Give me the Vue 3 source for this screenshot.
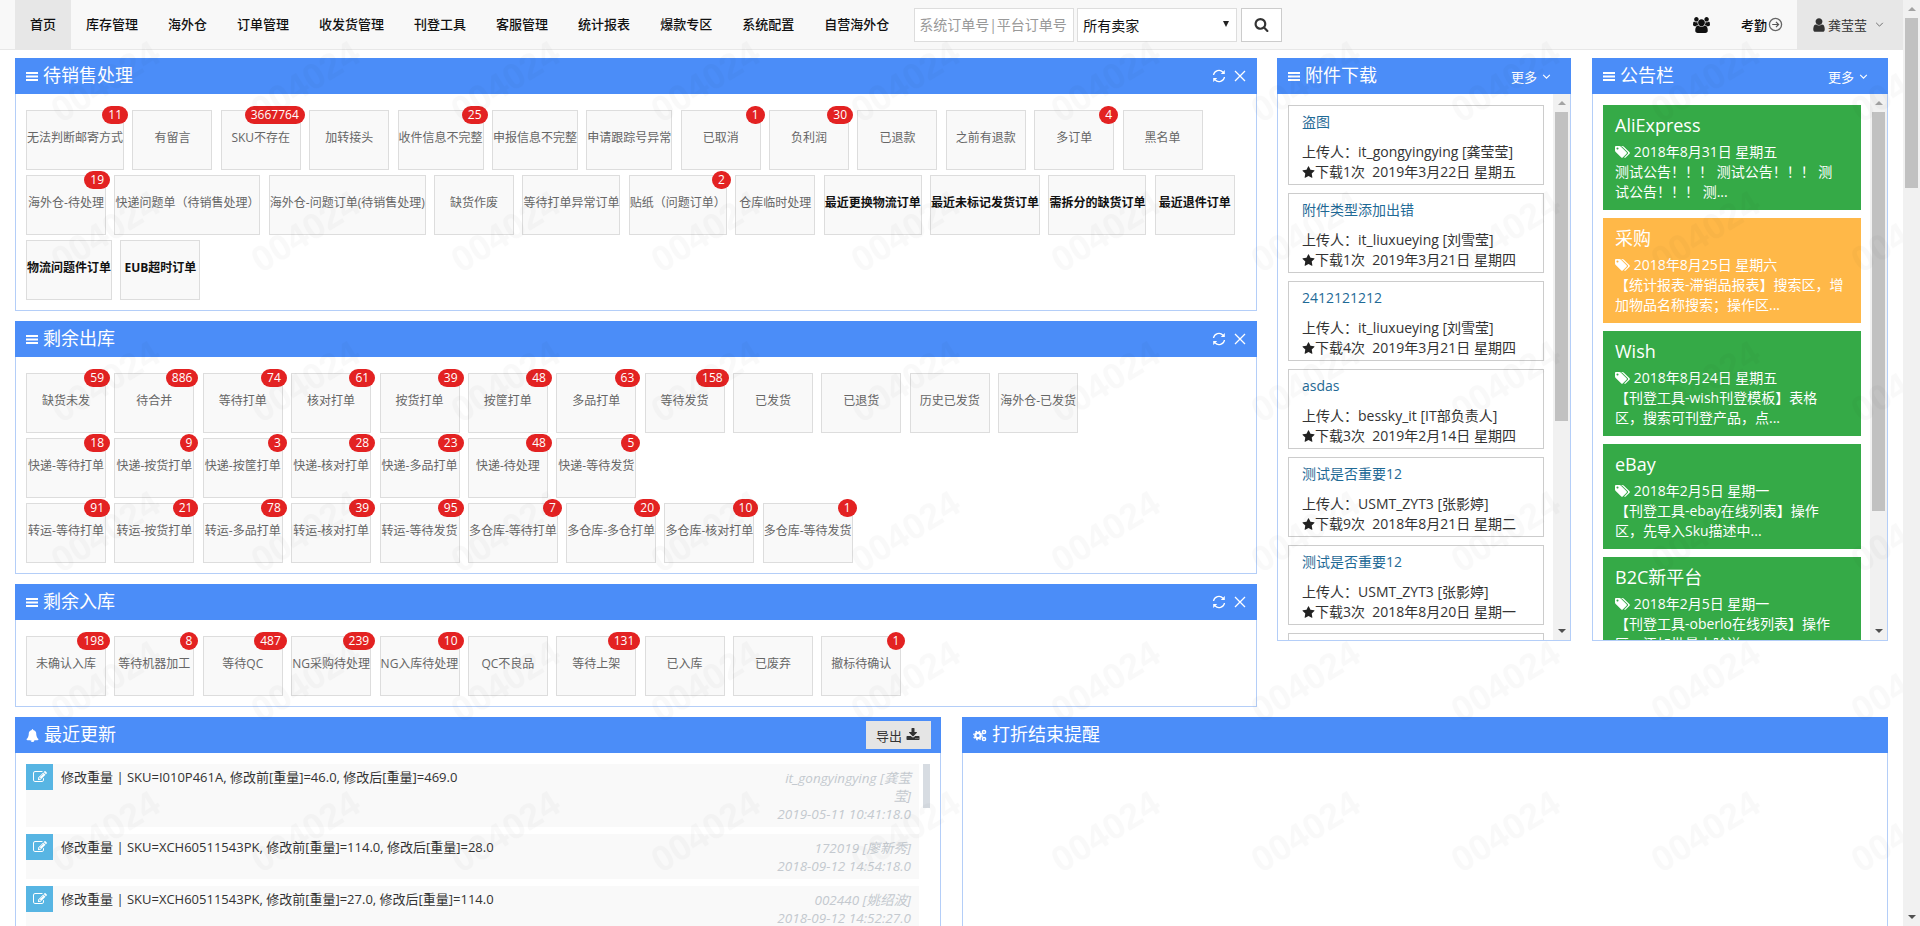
<template>
  <div class="page">
    <div class="main">
      <nav class="navbar">
        <a v-for="(m, i) in menus" :key="m" class="nav-item" :class="{ active: i === 0 }">{{ m }}</a>
        <input class="search-input" placeholder="系统订单号|平台订单号" />
        <div class="seller-select">
          <span>所有卖家</span>
          <i class="select-arrow"></i>
        </div>
        <button class="search-btn">
          <svg viewBox="0 0 1792 1792" width="15" height="15"><path :d="icons.search" fill="#333" /></svg>
        </button>
        <div class="nav-right">
          <svg class="group-icon" viewBox="0 0 1920 1792" width="17" height="16"><path :d="icons.group" fill="#111" /></svg>
          <span class="attend">考勤
            <svg viewBox="0 0 16 16" width="15" height="15">
              <circle cx="8" cy="8" r="6.5" fill="none" stroke="#666" stroke-width="1.4" />
              <path d="M4.5 8h6.5M8.500 5.200 11.300 8 8.500 10.800" fill="none" stroke="#555" stroke-width="1.3" />
            </svg>
          </span>
          <div class="user-box">
            <svg viewBox="0 0 1792 1792" width="16" height="16"><path :d="icons.user" fill="#333" /></svg>
            <span>龚莹莹</span>
            <svg class="user-chevron" viewBox="0 0 10 6" width="9" height="5"><path d="M1 1l4 4 4-4" fill="none" stroke="#666" stroke-width="1.1" /></svg>
          </div>
        </div>
      </nav>

      <div class="content">
        <div class="top-row">
          <div class="left-col">
            <section v-for="p in panels" :key="p.title" class="panel">
              <header class="panel-head">
                <svg class="bars" viewBox="0 0 12 11" width="12" height="11">
                  <path d="M0 1h12v2H0zM0 4.500h12v2H0zM0 8h12v2H0z" fill="#fff" />
                </svg>
                <h3>{{ p.title }}</h3>
                <div class="head-tools">
                  <svg viewBox="0 0 14 14" width="14" height="14">
                    <path d="M1.500 6A5.500 5.500 0 0 1 11 3.200M12.500 8A5.500 5.500 0 0 1 3 10.800" fill="none" stroke="#fff" stroke-width="1.300" />
                    <path d="M12.800 1v4h-4zM1.200 13V9h4z" fill="#fff" />
                  </svg>
                  <svg viewBox="0 0 12 12" width="12" height="12"><path d="M1 1l10 10M11 1 1 11" stroke="#fff" stroke-width="1.300" /></svg>
                </div>
              </header>
              <div class="panel-body">
                <div v-for="(row, r) in p.rows" :key="r" class="tile-row">
                  <div v-for="t in row" :key="t.name" class="tile" :class="{ strong: t.bold }">
                    {{ t.name }}
                    <span v-if="t.n" class="badge">{{ t.n }}</span>
                  </div>
                </div>
              </div>
            </section>
          </div>

          <section class="panel side-panel files">
            <header class="panel-head">
              <svg class="bars" viewBox="0 0 12 11" width="12" height="11">
                <path d="M0 1h12v2H0zM0 4.500h12v2H0zM0 8h12v2H0z" fill="#fff" />
              </svg>
              <h3>附件下载</h3>
              <span class="more">更多
                <svg viewBox="0 0 10 6" width="9" height="5"><path d="M1 1l4 4 4-4" fill="none" stroke="#fff" stroke-width="1.300" /></svg>
              </span>
            </header>
            <div class="side-body">
              <div class="side-list">
                <div v-for="(f, i) in files" :key="i" class="file-item">
                  <template v-if="f.title">
                    <div class="file-title">{{ f.title }}</div>
                    <div>上传人：{{ f.user }}</div>
                    <div class="file-line">
                      <svg viewBox="0 0 1792 1792" width="13" height="13"><path :d="icons.star" fill="#222" /></svg>下载{{ f.count }}次&nbsp; {{ f.date }}
                    </div>
                  </template>
                </div>
              </div>
              <div class="sbar">
                <i class="arrow-up"></i>
                <div class="thumb" :style="{ height: '309px' }"></div>
                <i class="arrow-down"></i>
              </div>
            </div>
          </section>

          <section class="panel side-panel notices">
            <header class="panel-head">
              <svg class="bars" viewBox="0 0 12 11" width="12" height="11">
                <path d="M0 1h12v2H0zM0 4.500h12v2H0zM0 8h12v2H0z" fill="#fff" />
              </svg>
              <h3>公告栏</h3>
              <span class="more">更多
                <svg viewBox="0 0 10 6" width="9" height="5"><path d="M1 1l4 4 4-4" fill="none" stroke="#fff" stroke-width="1.300" /></svg>
              </span>
            </header>
            <div class="side-body">
              <div class="side-list">
                <div v-for="n in notices" :key="n.title" class="notice" :class="n.color">
                  <h4>{{ n.title }}</h4>
                  <div class="notice-date">
                    <svg viewBox="0 0 1920 1792" width="15" height="14"><path :d="icons.tags" fill="#fff" /></svg>
                    {{ n.date }}
                  </div>
                  <div class="notice-text">{{ n.text }}</div>
                </div>
              </div>
              <div class="sbar">
                <i class="arrow-up"></i>
                <div class="thumb" :style="{ height: '399px' }"></div>
                <i class="arrow-down"></i>
              </div>
            </div>
          </section>
        </div>

        <div class="bottom-row">
          <section class="panel bottom-panel">
            <header class="panel-head">
              <svg viewBox="0 0 1792 1792" width="13" height="13"><path :d="icons.bell" fill="#fff" /></svg>
              <h3>最近更新</h3>
              <button class="export-btn">导出
                <svg viewBox="0 0 1792 1792" width="14" height="14"><path :d="icons.download" fill="#333" /></svg>
              </button>
            </header>
            <div class="log-body">
              <div class="log-list">
                <div v-for="(l, i) in logs" :key="i" class="log-row">
                  <div class="log-icon">
                    <svg viewBox="0 0 1792 1792" width="14" height="14"><path :d="icons.edit" fill="#fff" /></svg>
                  </div>
                  <div class="log-msg">{{ l.msg }}</div>
                  <div class="log-meta">
                    <div>{{ l.user }}</div>
                    <div class="log-time">{{ l.time }}</div>
                  </div>
                </div>
              </div>
              <div class="log-bar"></div>
            </div>
          </section>
          <section class="panel bottom-panel">
            <header class="panel-head">
              <svg viewBox="0 0 14 13" width="14" height="13">
                <circle cx="5" cy="6.500" r="2.700" fill="none" stroke="#fff" stroke-width="2.200" />
                <circle cx="5" cy="6.500" r="4.300" fill="none" stroke="#fff" stroke-width="1.200" stroke-dasharray="1.700 1.700" />
                <circle cx="11" cy="3" r="1.600" fill="none" stroke="#fff" stroke-width="1.500" />
                <circle cx="11" cy="10" r="1.600" fill="none" stroke="#fff" stroke-width="1.500" />
              </svg>
              <h3>打折结束提醒</h3>
            </header>
          </section>
        </div>
      </div>

      <svg class="watermark" width="1903" height="926">
        <defs>
          <pattern id="wm" width="200" height="150" patternUnits="userSpaceOnUse">
            <text x="105" y="94" text-anchor="middle" transform="rotate(-32 105 81)" class="wm-text">004024</text>
          </pattern>
        </defs>
        <rect width="1903" height="926" fill="url(#wm)" />
      </svg>
    </div>

    <div class="sbar page-bar">
      <i class="arrow-up"></i>
      <div class="thumb" :style="{ height: '170px' }"></div>
      <i class="arrow-down"></i>
    </div>
  </div>
</template>

<script setup>
const menus = ['首页', '库存管理', '海外仓', '订单管理', '收发货管理', '刊登工具', '客服管理', '统计报表', '爆款专区', '系统配置', '自营海外仓']

const t = (name, n, bold) => ({ name, n, bold })

const panels = [
  {
    title: '待销售处理',
    rows: [
      [t('无法判断邮寄方式', 11), t('有留言'), t('SKU不存在', 3667764), t('加转接头'), t('收件信息不完整', 25), t('申报信息不完整'), t('申请跟踪号异常'), t('已取消', 1), t('负利润', 30), t('已退款'), t('之前有退款'), t('多订单', 4), t('黑名单')],
      [t('海外仓-待处理', 19), t('快递问题单（待销售处理）'), t('海外仓-问题订单(待销售处理)'), t('缺货作废'), t('等待打单异常订单'), t('贴纸（问题订单）', 2), t('仓库临时处理'), t('最近更换物流订单', 0, true), t('最近未标记发货订单', 0, true), t('需拆分的缺货订单', 0, true), t('最近退件订单', 0, true)],
      [t('物流问题件订单', 0, true), t('EUB超时订单', 0, true)]
    ]
  },
  {
    title: '剩余出库',
    rows: [
      [t('缺货未发', 59), t('待合并', 886), t('等待打单', 74), t('核对打单', 61), t('按货打单', 39), t('按筐打单', 48), t('多品打单', 63), t('等待发货', 158), t('已发货'), t('已退货'), t('历史已发货'), t('海外仓-已发货')],
      [t('快递-等待打单', 18), t('快递-按货打单', 9), t('快递-按筐打单', 3), t('快递-核对打单', 28), t('快递-多品打单', 23), t('快递-待处理', 48), t('快递-等待发货', 5)],
      [t('转运-等待打单', 91), t('转运-按货打单', 21), t('转运-多品打单', 78), t('转运-核对打单', 39), t('转运-等待发货', 95), t('多仓库-等待打单', 7), t('多仓库-多仓打单', 20), t('多仓库-核对打单', 10), t('多仓库-等待发货', 1)]
    ]
  },
  {
    title: '剩余入库',
    rows: [
      [t('未确认入库', 198), t('等待机器加工', 8), t('等待QC', 487), t('NG采购待处理', 239), t('NG入库待处理', 10), t('QC不良品'), t('等待上架', 131), t('已入库'), t('已废弃'), t('撤标待确认', 1)]
    ]
  }
]

const files = [
  { title: '盗图', user: 'it_gongyingying [龚莹莹]', count: 1, date: '2019年3月22日 星期五' },
  { title: '附件类型添加出错', user: 'it_liuxueying [刘雪莹]', count: 1, date: '2019年3月21日 星期四' },
  { title: '2412121212', user: 'it_liuxueying [刘雪莹]', count: 4, date: '2019年3月21日 星期四' },
  { title: 'asdas', user: 'bessky_it [IT部负责人]', count: 3, date: '2019年2月14日 星期四' },
  { title: '测试是否重要12', user: 'USMT_ZYT3 [张影婷]', count: 9, date: '2018年8月21日 星期二' },
  { title: '测试是否重要12', user: 'USMT_ZYT3 [张影婷]', count: 3, date: '2018年8月20日 星期一' },
  { title: '' }
]

const notices = [
  { title: 'AliExpress', color: 'green', date: '2018年8月31日 星期五', text: '测试公告！！！ 测试公告！！！ 测\n试公告！！！ 测...' },
  { title: '采购', color: 'orange', date: '2018年8月25日 星期六', text: '【统计报表-滞销品报表】搜索区，增\n加物品名称搜索；操作区...' },
  { title: 'Wish', color: 'green', date: '2018年8月24日 星期五', text: '【刊登工具-wish刊登模板】表格\n区，搜索可刊登产品，点...' },
  { title: 'eBay', color: 'green', date: '2018年2月5日 星期一', text: '【刊登工具-ebay在线列表】操作\n区，先导入Sku描述中...' },
  { title: 'B2C新平台', color: 'green', date: '2018年2月5日 星期一', text: '【刊登工具-oberlo在线列表】操作\n区，添加批量上除送...' }
]

const logs = [
  { msg: '修改重量 | SKU=I010P461A, 修改前[重量]=46.0, 修改后[重量]=469.0', user: 'it_gongyingying [龚莹莹]', time: '2019-05-11 10:41:18.0' },
  { msg: '修改重量 | SKU=XCH60511543PK, 修改前[重量]=114.0, 修改后[重量]=28.0', user: '172019 [廖新秀]', time: '2018-09-12 14:54:18.0' },
  { msg: '修改重量 | SKU=XCH60511543PK, 修改前[重量]=27.0, 修改后[重量]=114.0', user: '002440 [姚绍波]', time: '2018-09-12 14:52:27.0' }
]

const icons = {
  search: 'M1216 832q0-185-131.5-316.5t-316.5-131.5-316.5 131.5-131.5 316.5 131.5 316.5 316.5 131.5 316.5-131.5 131.5-316.5zm512 832q0 52-38 90t-90 38q-54 0-90-38l-343-342q-179 124-399 124-143 0-273.5-55.5t-225-150-150-225-55.5-273.5 55.5-273.5 150-225 225-150 273.5-55.5 273.5 55.5 225 150 150 225 55.5 273.5q0 220-124 399l343 343q37 37 37 90z',
  group: 'M593 896q-162 5-265 128h-134q-82 0-138-40.500t-56-118.500q0-353 124-353 6 0 43.500 21t97.500 42.500 119 21.500q67 0 133-23-5 37-5 66 0 139 81 256zm1071 637q0 120-73 189.500t-194 69.500h-874q-121 0-194-69.500t-73-189.500q0-53 3.500-103.500t14-109 26.500-108.500 43-97.500 62-81 85.500-53.500 111.500-20q10 0 43 21.500t73 48 107 48 135 21.500 135-21.500 107-48 73-48 43-21.500q61 0 111.500 20t85.500 53.500 62 81 43 97.500 26.500 108.500 14 109 3.500 103.500zm-1024-1277q0 106-75 181t-181 75-181-75-75-181 75-181 181-75 181 75 75 181zm704 384q0 159-112.500 271.500t-271.500 112.500-271.500-112.500-112.500-271.500 112.500-271.500 271.500-112.500 271.500 112.500 112.500 271.500zm576 225q0 78-56 118.500t-138 40.500h-134q-103-123-265-128 81-117 81-256 0-29-5-66 66 23 133 23 59 0 119-21.500t97.500-42.500 43.500-21q124 0 124 353zm-128-609q0 106-75 181t-181 75-181-75-75-181 75-181 181-75 181 75 75 181z',
  user: 'M1536 1399q0 109-62.500 187t-150.500 78h-854q-88 0-150.500-78t-62.500-187q0-85 8.500-160.500t31.500-152 58.500-131 94-89 134.500-34.500q131 128 313 128t313-128q76 0 134.500 34.500t94 89 58.500 131 31.500 152 8.500 160.500zm-256-887q0 159-112.500 271.500t-271.500 112.500-271.500-112.500-112.500-271.500 112.500-271.500 271.500-112.500 271.500 112.500 112.500 271.500z',
  star: 'M1728 647q0 22-26 48l-363 354 86 500q1 7 1 20 0 21-10.500 35.500t-30.500 14.500q-19 0-40-12l-449-236-449 236q-22 12-40 12-21 0-31.500-14.500t-10.500-35.500q0-6 2-20l86-500-364-354q-25-27-25-48 0-37 56-46l502-73 225-455q19-41 49-41t49 41l225 455 502 73q56 9 56 46z',
  tags: 'M448 448q0-53-37.500-90.500t-90.500-37.500-90.500 37.500-37.500 90.500 37.500 90.500 90.500 37.500 90.500-37.500 37.500-90.500zm1067 576q0 53-37 90l-491 492q-39 37-91 37-53 0-90-37l-715-716q-38-37-64.500-101t-26.500-117v-416q0-52 38-90t90-38h416q53 0 117 26.500t102 64.500l715 714q37 39 37 91zm384 0q0 53-37 90l-491 492q-39 37-91 37-36 0-59-14t-53-45l470-470q37-37 37-90 0-52-37-91l-715-714q-38-38-102-64.500t-117-26.500h224q53 0 117 26.500t102 64.500l715 714q37 39 37 91z',
  bell: 'M912 1696q0-16-16-16-59 0-101.500-42.500t-42.500-101.500q0-16-16-16t-16 16q0 73 51.500 124.500t124.500 51.500q16 0 16-16zm816-288q0 52-38 90t-90 38h-448q0 106-75 181t-181 75-181-75-75-181h-448q-52 0-90-38t-38-90q50-42 91-88t85-119.500 74.500-158.500 50-206 19.500-260q0-152 117-282.500t307-158.500q-8-19-8-39 0-40 28-68t68-28 68 28 28 68q0 20-8 39 190 28 307 158.500t117 282.500q0 139 19.500 260t50 206 74.500 158.500 85 119.500 91 88z',
  download: 'M1344 1344q0-26-19-45t-45-19-45 19-19 45 19 45 45 19 45-19 19-45zm256 0q0-26-19-45t-45-19-45 19-19 45 19 45 45 19 45-19 19-45zm128-224v320q0 40-28 68t-68 28h-1472q-40 0-68-28t-28-68v-320q0-40 28-68t68-28h465l135 136q58 56 136 56t136-56l136-136h464q40 0 68 28t28 68zm-325-569q17 41-14 70l-448 448q-18 19-45 19t-45-19l-448-448q-31-29-14-70 17-39 59-39h256v-448q0-26 19-45t45-19h256q26 0 45 19t19 45v448h256q42 0 59 39z',
  edit: 'M888 1184l116-116-152-152-116 116v56h96v96h56zm440-720q-16-16-33 1l-350 350q-17 17-1 33t33-1l350-350q17-17 1-33zm80 594v190q0 119-84.500 203.500t-203.500 84.500h-832q-119 0-203.500-84.500t-84.500-203.500v-832q0-119 84.500-203.500t203.500-84.500h832q63 0 117 25 15 7 18 23 3 17-9 29l-49 49q-14 14-32 8-23-6-45-6h-832q-66 0-113 47t-47 113v832q0 66 47 113t113 47h832q66 0 113-47t47-113v-126q0-13 9-22l64-64q15-15 35-7t20 29zm-96-738l288 288-672 672h-288v-288zm444 132l-92 92-288-288 92-92q28-28 68-28t68 28l152 152q28 28 28 68t-28 68z'
}
</script>

<style>
html, body {
  margin: 0;
  height: 926px;
  overflow: hidden;
  background: #fff;
}
</style>

<style scoped>
.page {
  display: flex;
  height: 926px;
  font-family: "Open Sans", "Noto Sans CJK SC", sans-serif;
  font-size: 13px;
  color: #333;
}

.main {
  position: relative;
  width: 1903px;
  overflow: hidden;
}

.navbar {
  display: flex;
  align-items: center;
  height: 49px;
  padding-left: 15px;
  background: #f8f8f8;
  border-bottom: 1px solid #e7e7e7;
}

.nav-item {
  padding: 0 15px;
  line-height: 49px;
  color: #111;
  font-weight: 500;
}

.nav-item.active {
  background: #e7e7e7;
}

.search-input {
  box-sizing: border-box;
  width: 160px;
  height: 34px;
  margin-left: 10px;
  padding: 0 4px;
  border: 1px solid #ddd;
  background: #fff;
  font: 14px "Open Sans", "Noto Sans CJK SC", sans-serif;
  outline: none;
}

.search-input::placeholder {
  color: #999;
}

.seller-select {
  box-sizing: border-box;
  display: flex;
  align-items: center;
  justify-content: space-between;
  width: 160px;
  height: 34px;
  margin-left: 3px;
  padding: 0 7px 0 5px;
  border: 1px solid #ddd;
  background: #fff;
  color: #111;
  font-size: 14px;
}

.select-arrow {
  border-left: 3.500px solid transparent;
  border-right: 3.500px solid transparent;
  border-top: 6px solid #222;
  margin-bottom: 2px;
}

.search-btn {
  box-sizing: border-box;
  display: flex;
  align-items: center;
  justify-content: center;
  width: 41px;
  height: 34px;
  margin-left: 4px;
  padding: 0;
  border: 1px solid #ccc;
  background: #fff;
}

.nav-right {
  display: flex;
  align-items: center;
  margin-left: auto;
  height: 49px;
}

.group-icon {
  margin-right: 31px;
}

.attend {
  display: flex;
  align-items: center;
  gap: 1px;
  margin-right: 14px;
  color: #111;
  font-weight: 500;
}

.user-box {
  display: flex;
  align-items: center;
  width: 106px;
  height: 49px;
  padding-left: 14px;
  box-sizing: border-box;
  background: #e7e7e7;
  gap: 1px;
}

.user-chevron {
  margin-left: 7px;
}

.content {
  padding: 8px 15px 0;
}

.top-row {
  display: flex;
  align-items: flex-start;
  margin-bottom: 10px;
}

.left-col {
  width: 1242px;
  display: flex;
  flex-direction: column;
  gap: 10px;
}

.panel {
  box-sizing: border-box;
  border: 1px solid #b4cef8;
  border-top: 0;
  background: #fff;
}

.panel-head {
  display: flex;
  align-items: center;
  height: 36px;
  margin: 0 -1px;
  padding: 0 11px;
  background: #4b8df8;
  color: #fff;
}

.panel-head h3 {
  margin: 0 0 0 5px;
  font-size: 18px;
  font-weight: 400;
  line-height: 34px;
  height: 36px;
}

.head-tools {
  display: flex;
  align-items: center;
  gap: 8px;
  margin-left: auto;
}

.panel-body {
  display: flex;
  flex-direction: column;
  gap: 5px;
  padding: 16px 10px 10px;
}

.tile-row {
  display: flex;
  gap: 8.380px;
}

.tile {
  position: relative;
  box-sizing: border-box;
  min-width: 80px;
  height: 60px;
  padding-top: 17px;
  border: 1px solid #ddd;
  background: #f9f9f9;
  color: #666;
  font-size: 12px;
  line-height: 20px;
  text-align: center;
  white-space: nowrap;
}

.tile.strong {
  color: #111;
  font-weight: 700;
}

.badge {
  position: absolute;
  top: -5px;
  right: -5px;
  height: 18px;
  padding: 0 6px;
  border-radius: 9px;
  background: #e32222;
  color: #fff;
  font-weight: 400;
  line-height: 18px;
}

.more {
  display: flex;
  align-items: center;
  gap: 5px;
  margin-left: auto;
  padding-right: 9px;
}

.side-panel {
  height: 583px;
  display: flex;
  flex-direction: column;
}

.files {
  width: 294px;
  margin-left: 20px;
}

.notices {
  width: 296px;
  margin-left: 21px;
}

.side-body {
  flex: 1;
  min-height: 0;
  display: flex;
}

.side-list {
  flex: 1;
  min-width: 0;
  overflow: hidden;
  padding: 11px 9px 0 10px;
  display: flex;
  flex-direction: column;
  gap: 8px;
  font-size: 14px;
}

.file-item {
  box-sizing: border-box;
  flex: none;
  height: 80px;
  padding: 6px 13px 0;
  border: 1px solid #ccc;
  line-height: 20px;
  white-space: nowrap;
}

.file-title {
  height: 30px;
  color: #1f6a96;
}

.file-line svg {
  vertical-align: -2px;
}

.notice {
  box-sizing: border-box;
  flex: none;
  height: 105px;
  padding: 8px 12px 0;
  color: #fff;
  line-height: 20px;
}

.notice h4 {
  margin: 0;
  height: 29px;
  font-size: 18px;
  font-weight: 400;
  line-height: 25px;
}

.notice-date svg {
  vertical-align: -2px;
}

.notice-text {
  white-space: pre;
}

.notice.green {
  background: #35aa47;
}

.notice.orange {
  background: #ffb848;
}

.sbar {
  flex: none;
  width: 17px;
  display: flex;
  flex-direction: column;
  align-items: center;
  background: #f1f1f1;
}

.arrow-up {
  flex: none;
  margin: 7px 0;
  border-left: 4px solid transparent;
  border-right: 4px solid transparent;
  border-bottom: 4px solid #a3a3a3;
}

.thumb {
  flex: none;
  width: 13px;
  background: #c1c1c1;
}

.arrow-down {
  flex: none;
  margin: auto 0 7px;
  border-left: 4px solid transparent;
  border-right: 4px solid transparent;
  border-top: 4px solid #505050;
}

.page-bar {
  height: 926px;
}

.bottom-row {
  display: flex;
  gap: 21px;
}

.bottom-panel {
  flex: 1;
  height: 300px;
}

.export-btn {
  display: flex;
  align-items: center;
  gap: 4px;
  margin-left: auto;
  margin-right: -1px;
  width: 65px;
  height: 28px;
  padding: 0 0 0 10px;
  border: 0;
  background: #e5e5e5;
  color: #333;
  font: 13px "Open Sans", "Noto Sans CJK SC", sans-serif;
}

.log-body {
  display: flex;
  gap: 4px;
  padding: 11px 10px 0;
}

.log-list {
  flex: 1;
  display: flex;
  flex-direction: column;
  gap: 7px;
}

.log-row {
  display: flex;
  background: #f9f9f9;
  padding-right: 8px;
}

.log-icon {
  flex: none;
  display: flex;
  align-items: center;
  justify-content: center;
  width: 27px;
  height: 26px;
  background: #57b5e3;
}

.log-msg {
  flex: 1;
  padding: 4px 0 0 8px;
  color: #333;
  line-height: 18px;
}

.log-meta {
  flex: none;
  width: 135px;
  padding: 5px 0 4px;
  color: #c4c9cf;
  font-size: 13.500px;
  font-style: italic;
  line-height: 18px;
  text-align: right;
}

.log-time {
  white-space: nowrap;
}

.log-bar {
  flex: none;
  width: 7px;
  height: 44px;
  background: #d7dce2;
}

.watermark {
  position: absolute;
  top: 0;
  left: 0;
  pointer-events: none;
}

.wm-text {
  font-family: "Liberation Sans", sans-serif;
  font-size: 36px;
  font-weight: 700;
  fill: rgba(0, 0, 0, 0.022);
}
</style>
